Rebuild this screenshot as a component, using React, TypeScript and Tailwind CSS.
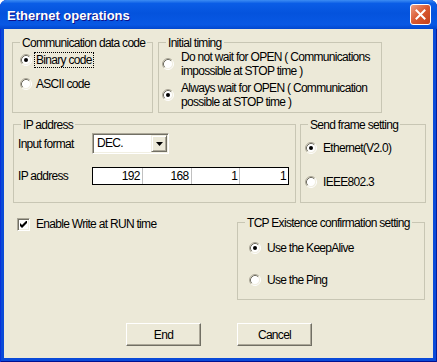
import type { ReactNode } from "react";

const Radio = ({ checked = false }: { checked?: boolean }) => (
  <svg width="12" height="12" viewBox="0 0 12 12" className="shrink-0">
    <circle cx="6" cy="6" r="4.5" fill="#fff" />
    <path d="M2.11 9.89 A5.5 5.5 0 0 1 9.89 2.11" fill="none" stroke="#aca899" />
    <path d="M9.89 2.11 A5.5 5.5 0 0 1 2.11 9.89" fill="none" stroke="#fff" />
    <path d="M2.82 9.18 A4.5 4.5 0 0 1 9.18 2.82" fill="none" stroke="#716f64" />
    <path d="M9.18 2.82 A4.5 4.5 0 0 1 2.82 9.18" fill="none" stroke="#f1efe2" />
    {checked && <circle cx="6" cy="6" r="2" fill="#000" />}
  </svg>
);

const Group = ({
  label,
  className,
  children,
}: {
  label: string;
  className: string;
  children?: ReactNode;
}) => (
  <div className={`relative shrink-0 border border-[#c8c6b4] ${className}`}>
    <span className="absolute left-[7px] top-[-7px] whitespace-nowrap bg-[#ece9d8] px-[2px] leading-[14px]">
      {label}
    </span>
    {children}
  </div>
);

const Option = ({
  checked,
  focused,
  children,
  gap,
}: {
  checked?: boolean;
  focused?: boolean;
  children: ReactNode;
  gap: string;
}) => (
  <div className="flex h-[16px] items-center">
    <Radio checked={checked} />
    <span
      className={`${gap} whitespace-nowrap border px-[1px] leading-[14px] ${
        focused ? "border-dotted border-black" : "border-transparent"
      }`}
    >
      {children}
    </span>
  </div>
);

const Button = ({ children }: { children: ReactNode }) => (
  <button className="flex h-[23px] w-[75px] items-center justify-center border border-t-white border-l-white border-r-[#716f64] border-b-[#716f64] bg-[#ece9d8] shadow-[inset_-1px_-1px_0_#aca899]">
    {children}
  </button>
);

export default function App() {
  return (
    <div className="h-[362px] w-[437px] bg-white">
      <div className="flex h-full flex-col rounded-t-[7px] bg-[#0a4ad8] shadow-[inset_1px_0_0_#0831d9,inset_-1px_0_0_#001ea0,inset_0_-1px_0_#001090]">
        <div className="flex h-[29px] shrink-0 items-center justify-between rounded-t-[7px] bg-[linear-gradient(180deg,#3c8cf3_0%,#0a5de6_12%,#0453dd_45%,#0858e4_85%,#0247ce_100%)] pl-[7px] pr-[6px]">
          <span className="pt-[3px] font-['Liberation_Sans',sans-serif] text-[13px] font-bold text-white [text-shadow:1px_1px_#0f1089]">
            Ethernet operations
          </span>
          <div className="flex h-[21px] w-[21px] items-center justify-center rounded-[3px] border border-white bg-[linear-gradient(135deg,#ee9e82,#d9582f_50%,#c2401c)]">
            <svg width="11" height="11" viewBox="0 0 11 11">
              <path d="M1.5 1.5 L9.5 9.5 M9.5 1.5 L1.5 9.5" stroke="#fff" strokeWidth="2" strokeLinecap="square" />
            </svg>
          </div>
        </div>

        <div className="mx-[4px] mb-[4px] flex flex-1 flex-col bg-[#ece9d8] pl-[8px] pr-[8px] pt-[13px] font-['Liberation_Sans',sans-serif] text-[12px] tracking-[-0.7px] text-black">
          <div className="flex gap-[5px]">
            <Group label="Communication data code" className="h-[71px] w-[141px]">
              <div className="flex flex-col gap-[8px] pl-[7px] pt-[9px]">
                <Option checked focused gap="ml-[2px]">
                  Binary code
                </Option>
                <Option gap="ml-[2px]">ASCII code</Option>
              </div>
            </Group>
            <Group label="Initial timing" className="h-[71px] w-[224px]">
              <div className="flex flex-col gap-[3px] pl-[3px] pt-[7px]">
                <div className="flex items-center">
                  <Radio />
                  <span className="ml-[7px] whitespace-nowrap leading-[14px]">
                    Do not wait for OPEN ( Communications
                    <br />
                    impossible at STOP time )
                  </span>
                </div>
                <div className="flex items-center">
                  <Radio checked />
                  <span className="ml-[7px] whitespace-nowrap leading-[14px]">
                    Always wait for OPEN ( Communication
                    <br />
                    possible at STOP time )
                  </span>
                </div>
              </div>
            </Group>
          </div>

          <div className="ml-[1px] mt-[11px] flex gap-[4px]">
            <Group label="IP address" className="h-[79px] w-[283px]">
              <div className="flex flex-col pl-[4px] pt-[8px]">
                <div className="flex items-center">
                  <span className="w-[74px]">Input format</span>
                  <div className="flex h-[21px] w-[77px] border border-t-[#aca899] border-l-[#aca899] border-r-white border-b-white bg-white shadow-[inset_1px_1px_0_#716f64,inset_-1px_-1px_0_#f1efe2]">
                    <span className="flex-1 pl-[4px] pt-[2px] leading-[15px]">DEC.</span>
                    <div className="mr-[1px] mt-[1px] mb-[1px] flex w-[16px] items-center justify-center border border-t-[#f1efe2] border-l-[#f1efe2] border-r-[#716f64] border-b-[#716f64] bg-[#ece9d8] shadow-[inset_1px_1px_0_#fff,inset_-1px_-1px_0_#aca899]">
                      <svg width="7" height="4" viewBox="0 0 7 4">
                        <path d="M0 0 H7 L3.5 4 Z" fill="#000" />
                      </svg>
                    </div>
                  </div>
                </div>
                <div className="mt-[13px] flex items-center">
                  <span className="w-[74px]">IP address</span>
                  <div className="grid h-[18px] w-[197px] grid-cols-4 border border-black bg-white leading-[16px]">
                    <span className="pr-[2px] text-right">192</span>
                    <span className="border-l border-[#c0c0c0] pr-[2px] text-right">168</span>
                    <span className="border-l border-[#c0c0c0] pr-[2px] text-right">1</span>
                    <span className="border-l border-[#c0c0c0] pr-[2px] text-right">1</span>
                  </div>
                </div>
              </div>
            </Group>
            <Group label="Send frame setting" className="h-[79px] w-[126px]">
              <div className="flex flex-col gap-[18px] pl-[4px] pt-[15px]">
                <Option checked gap="ml-[4px]">
                  Ethernet(V2.0)
                </Option>
                <Option gap="ml-[4px]">IEEE802.3</Option>
              </div>
            </Group>
          </div>

          <div className="mt-[14px] flex items-start">
            <div className="ml-[5px] flex items-center">
              <div className="flex h-[13px] w-[13px] items-center justify-center border border-t-[#aca899] border-l-[#aca899] border-r-white border-b-white bg-white shadow-[inset_1px_1px_0_#716f64,inset_-1px_-1px_0_#f1efe2]">
                <svg width="7" height="7" viewBox="0 0 7 7">
                  <path d="M0 2 L2 4 L7 -1 V2 L2 7 L0 5 Z" fill="#000" />
                </svg>
              </div>
              <span className="ml-[6px] whitespace-nowrap leading-[14px]">Enable Write at RUN time</span>
            </div>
            <Group label="TCP Existence confirmation setting" className="ml-auto mt-[5px] h-[78px] w-[188px]">
              <div className="flex flex-col gap-[16px] pl-[11px] pt-[17px]">
                <Option checked gap="ml-[4px]">
                  Use the KeepAlive
                </Option>
                <Option gap="ml-[4px]">Use the Ping</Option>
              </div>
            </Group>
          </div>

          <div className="ml-[114px] mt-[23px] flex gap-[36px]">
            <Button>End</Button>
            <Button>Cancel</Button>
          </div>
        </div>
      </div>
    </div>
  );
}
